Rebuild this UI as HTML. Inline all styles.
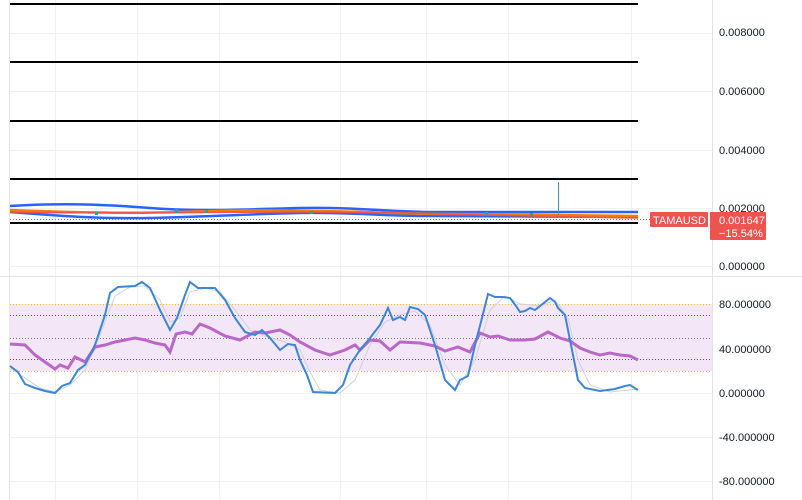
<!DOCTYPE html>
<html><head><style>
body{margin:0;background:#fff;width:802px;height:500px;overflow:hidden;font-family:"Liberation Sans",sans-serif}
</style></head><body>
<svg width="802" height="500" xmlns="http://www.w3.org/2000/svg" style="position:absolute;left:0;top:0">
<g stroke="#f0f1f3" stroke-width="1">
<line x1="55.5" y1="0" x2="55.5" y2="500"/><line x1="137.5" y1="0" x2="137.5" y2="500"/>
<line x1="219.5" y1="0" x2="219.5" y2="500"/><line x1="340.5" y1="0" x2="340.5" y2="500"/>
<line x1="426.5" y1="0" x2="426.5" y2="500"/><line x1="508.5" y1="0" x2="508.5" y2="500"/>
<line x1="631.5" y1="0" x2="631.5" y2="500"/>
<line x1="10" y1="33.5" x2="712" y2="33.5"/><line x1="10" y1="91.5" x2="712" y2="91.5"/>
<line x1="10" y1="150.5" x2="712" y2="150.5"/><line x1="10" y1="208.5" x2="712" y2="208.5"/>
<line x1="10" y1="266.5" x2="712" y2="266.5"/>
<line x1="10" y1="393.5" x2="712" y2="393.5"/><line x1="10" y1="437.5" x2="712" y2="437.5"/>
<line x1="10" y1="481.5" x2="712" y2="481.5"/>
</g>
<line x1="9.5" y1="0" x2="9.5" y2="500" stroke="#e6e7ea"/>
<line x1="712.5" y1="0" x2="712.5" y2="500" stroke="#e0e3eb"/>
<line x1="0" y1="276.5" x2="802" y2="276.5" stroke="#e0e3eb"/>
<g stroke="#000" stroke-width="2">
<line x1="10" y1="4" x2="638" y2="4"/><line x1="10" y1="62" x2="638" y2="62"/>
<line x1="10" y1="121" x2="638" y2="121"/><line x1="10" y1="179" x2="638" y2="179"/>
<line x1="10" y1="223" x2="638" y2="223"/>
</g>
<!-- price bands -->
<path d="M10,206 C60,203 100,204 150,208 S250,209 300,208 S380,211 430,212 L638,212" stroke="#2962ff" stroke-width="2.5" fill="none"/>
<path d="M10,212 C60,216 100,219 150,218 S250,214 300,213 S380,216 430,216 L638,217" stroke="#2962ff" stroke-width="2.5" fill="none"/>
<path d="M10,210 C60,212 120,214 180,212 S260,210 320,211 S400,214 460,214 L638,216" stroke="#f57c00" stroke-width="2.5" fill="none"/>
<path d="M10,212 C100,214 200,212 300,212 S450,215 638,218" stroke="#ef5350" stroke-width="1.5" fill="none"/>
<g fill="#26a69a"><rect x="95" y="212" width="3" height="3"/><rect x="175" y="209" width="3" height="4"/><rect x="205" y="210" width="3" height="3"/><rect x="310" y="211" width="3" height="3"/><rect x="485" y="212" width="3" height="3"/><rect x="530" y="213" width="3" height="3"/></g>
<line x1="558.5" y1="182" x2="558.5" y2="215" stroke="#26a69a"/>
<line x1="10" y1="219.5" x2="650" y2="219.5" stroke="#ef5350" stroke-dasharray="1,2"/>
<!-- RSI pane -->
<rect x="10" y="304" width="702" height="67" fill="#f3e6f6"/>
<line x1="10" y1="304.5" x2="712" y2="304.5" stroke="#f2c418" stroke-dasharray="1,2"/>
<line x1="10" y1="371.5" x2="712" y2="371.5" stroke="#f2c418" stroke-dasharray="1,2"/>
<line x1="10" y1="315.5" x2="712" y2="315.5" stroke="#9c27b0" stroke-dasharray="1,2"/>
<line x1="10" y1="359.5" x2="712" y2="359.5" stroke="#9c27b0" stroke-dasharray="1,2"/>
<line x1="10" y1="338.5" x2="712" y2="338.5" stroke="#777" stroke-dasharray="1,2"/>
<polyline fill="none" stroke="#cfd2d8" stroke-width="1" points="10,368 25,378 40,388 55,392 70,385 85,370 100,335 115,296 130,287 145,286 160,300 170,322 180,318 190,292 205,288 220,292 235,310 250,330 265,336 285,342 300,350 310,372 320,390 340,393 355,380 370,345 385,322 400,315 415,311 430,325 445,365 460,385 475,360 490,310 505,296 520,304 540,306 555,300 568,318 578,360 590,385 610,392 638,389"/>
<polyline fill="none" stroke="#ba68c8" stroke-width="3" points="10,344 25,345 35,355 45,362 55,369 60,365 68,368 75,357 85,362 95,347 105,345 115,342 125,340 135,338 145,340 155,343 165,345 170,352 176,334 185,332 192,334 200,324 210,328 225,336 240,340 255,332 265,333 280,330 290,335 300,342 315,350 330,355 345,350 355,345 360,350 370,340 380,341 390,350 400,342 420,343 435,346 445,351 458,347 470,352 480,333 490,337 498,336 510,340 525,340 535,339 548,332 560,338 570,341 580,348 590,352 600,355 610,353 620,355 630,356 638,360"/>
<polyline fill="none" stroke="#3d85d8" stroke-width="2" points="10,366 18,372 25,384 35,388 45,391 55,393 62,386 70,383 78,370 85,365 95,345 105,315 110,293 118,287 135,286 142,282 150,288 160,310 170,330 177,318 185,295 190,282 198,288 215,288 225,300 235,318 245,332 255,335 262,330 270,338 280,350 288,344 295,345 300,360 307,375 313,392 335,393 343,385 350,365 360,350 370,338 380,325 388,308 393,320 400,317 405,320 410,307 418,309 425,315 435,345 445,380 455,390 460,380 468,376 475,345 482,318 488,294 495,297 503,297 510,298 516,306 520,312 525,311 530,308 535,310 540,306 545,302 550,298 555,302 558,308 565,315 572,350 578,380 585,388 600,391 615,389 625,386 630,385 638,390"/>
<g font-size="11" fill="#131722" font-family="Liberation Sans,sans-serif">
<text x="719" y="36">0.008000</text><text x="719" y="95">0.006000</text>
<text x="719" y="154">0.004000</text><text x="719" y="212">0.002000</text>
<text x="719" y="270">0.000000</text>
<text x="719" y="308">80.000000</text><text x="719" y="353">40.000000</text>
<text x="719" y="397">0.000000</text><text x="719" y="441">-40.000000</text>
<text x="719" y="485">-80.000000</text>
</g>
<rect x="650" y="212" width="58" height="15" rx="1" fill="#ef5350"/>
<rect x="710" y="212" width="56" height="28" rx="1" fill="#ef5350"/>
<g font-size="11" fill="#fff" font-family="Liberation Sans,sans-serif">
<text x="653" y="224">TAMAUSD</text><text x="719" y="224">0.001647</text><text x="719" y="237">−15.54%</text>
</g>
</svg>
</body></html>
